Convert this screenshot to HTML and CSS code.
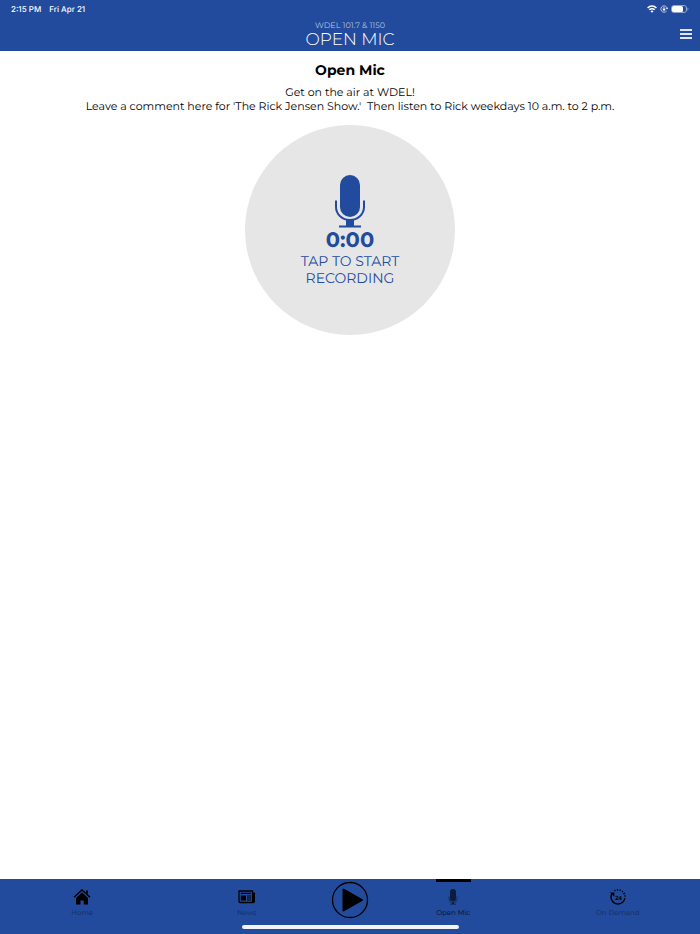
FILE: index.html
```html
<!DOCTYPE html>
<html lang="en">
<head>
<meta charset="utf-8">
<meta name="viewport" content="width=device-width, initial-scale=1">
<title>Open Mic</title>
<link rel="stylesheet" href="styles.css">
</head>
<body>
<header class="header">
  <div class="status">
    <div class="status-text"><span>2:15 PM</span><span>Fri Apr 21</span></div>
    <div class="status-icons">
      <svg width="10" height="8" viewBox="0 0 10 8" fill="none" stroke="#fff" stroke-width="1.500"><path d="M.6 3C3 .4 7 .4 9.400 3M2.300 4.800c1.500-1.500 3.900-1.500 5.400 0"/><path d="M5 7.800 3.500 6.200c.8-.8 2.200-.8 3 0z" fill="#fff" stroke="none"/></svg>
      <svg width="8" height="8" viewBox="0 0 8 8" fill="none" stroke="#e4eaf5" stroke-width=".8"><path d="M6.600 6A3.200 3.200 0 1 1 7.200 3.500M5.900 3l1.300 1 .7-1.400"/><rect x="2.800" y="3.600" width="2.400" height="2" fill="#fff" stroke="none"/><path d="M3.200 3.800v-.6a.8.8 0 0 1 1.600 0v.6" stroke-width=".6"/></svg>
      <svg width="18" height="8" viewBox="0 0 18 8"><rect x=".5" y=".5" width="15" height="7" rx="2.500" fill="none" stroke="#91a5cd"/><rect x="1" y="1" width="11" height="6" rx="1.500" fill="#fff"/><path d="M16.500 2.500v3c1.200-.5 1.200-2.500 0-3z" fill="#91a5cd"/></svg>
    </div>
  </div>
  <div class="titlebar">
    <div class="titles">
      <p class="station">WDEL 101.7 &amp; 1150</p>
      <h1 class="title">OPEN MIC</h1>
    </div>
    <button class="menu" type="button" aria-label="Menu"><svg width="12" height="10" viewBox="0 0 12 10" fill="#dfe5f1"><path d="M0 0h12v2H0zM0 4h12v2H0zM0 8h12v2H0z"/></svg></button>
  </div>
</header>
<main class="main">
  <h2 class="heading">Open Mic</h2>
  <p class="intro">Get on the air at WDEL!<br>Leave a comment here for 'The Rick Jensen Show.'&nbsp; Then listen to Rick weekdays 10 a.m. to 2 p.m.</p>
  <button class="record" type="button">
    <svg width="30" height="53" viewBox="0 0 30 53" fill="#224b9d"><rect x="5" y="0" width="20" height="42" rx="10"/><path d="M1 25.500v6.500a14 13 0 0 0 28 0v-6.500" fill="none" stroke="#224b9d" stroke-width="2"/><path d="M11 44h8v6.500h7V52.500H4V50.500h7z"/></svg>
    <span class="time">0:00</span>
    <span class="prompt">TAP TO START<br>RECORDING</span>
  </button>
</main>
<nav class="nav">
  <div class="tabs">
    <a class="tab" href="#home">
      <svg width="18" height="16" viewBox="0 0 18 16"><path d="M3 9 9 3.400 15 9v6.500h-4.300v-4H7.500v4H3z"/><path d="M1 8.300 9 1l8 7.300" fill="none" stroke="#000" stroke-width="1.500"/><path d="M13 1.500h2v4.300l-2-1.800z"/></svg>
      <span>Home</span>
    </a>
    <a class="tab" href="#news">
      <svg width="18" height="16" viewBox="0 0 18 16"><path d="M1 2h13.500v11.500H2Q1 13.500 1 12.500z" fill="none" stroke="#000" stroke-width="1.300"/><path d="M15 3.500h2V13q-1 1.500-2.500 1zM2.800 3.800h10v1.300h-10zM2.800 6.500H8v5H2.800zM9 6.500h4v1H9zM9 8.500h4v1H9zM9 10.500h4v1H9z"/></svg>
      <span>News</span>
    </a>
    <button class="play" type="button" aria-label="Play"><svg width="38" height="38" viewBox="0 0 38 38"><circle cx="19" cy="19" r="17.500" fill="none" stroke="#000" stroke-width="1.300"/><path d="M12.500 8.500 31 19 12.500 29.500z" stroke="#000" stroke-width="2" stroke-linejoin="round"/></svg></button>
    <a class="tab active" href="#mic" aria-current="page">
      <svg width="18" height="16" viewBox="0 0 18 16" fill="#0b1c3d"><rect x="6" y="0" width="6" height="12.500" rx="3"/><path d="M5 7.500v2.500a4 3.800 0 0 0 8 0V7.500" fill="none" stroke="#0b1c3d" stroke-width=".6"/><path d="M8 13.500h2v1.300h2v.8H6v-.8h2z"/></svg>
      <span>Open Mic</span>
    </a>
    <a class="tab" href="#demand">
      <svg width="18" height="16" viewBox="0 0 18 16"><path d="M3 4.500A7 7 0 1 0 16 9" fill="none" stroke="#000" stroke-width="1.500"/><path d="M.8 3.500h4.500v4.300z"/><path d="M5.500 1.800A7 7 0 0 1 16 7.800" fill="none" stroke="#000" stroke-width="1.700" stroke-dasharray="1.200 1.400"/><text class="day" x="9.500" y="10.500" text-anchor="middle">24</text></svg>
      <span>On Demand</span>
    </a>
  </div>
  <div class="indicator"></div>
</nav>
</body>
</html>
```
FILE: styles.css
```css
* { box-sizing: border-box; }
body {
  display: flex;
  flex-direction: column;
  min-height: 100vh;
  margin: 0;
  background: #fff;
  color: #000;
  font-family: Montserrat, Inter, sans-serif;
  text-rendering: geometricPrecision;
}
h1, h2, p { margin: 0; }
button {
  padding: 0;
  border: 0;
  background: none;
  color: inherit;
  font: inherit;
  text-rendering: inherit;
  cursor: pointer;
}
svg { display: block; }
.header { background: #224b9d; color: #fff; }
.status {
  display: flex;
  justify-content: space-between;
  align-items: center;
  height: 17px;
  padding: 0 11px;
  font: 500 8px/16px Inter, sans-serif;
}
.status-text { display: flex; gap: 8px; }
.status-icons { display: flex; align-items: center; gap: 3px; }
.titlebar {
  display: grid;
  grid-template-columns: 1fr auto 1fr;
  align-items: center;
  height: 34px;
  padding: 0 8px;
}
.titles { grid-column: 2; text-align: center; }
.station { color: #b9c6e0; font-size: 8px; line-height: 12px; }
.title { font-size: 17px; font-weight: 300; line-height: 17px; }
.menu { justify-self: end; }
.main {
  flex: 1;
  display: flex;
  flex-direction: column;
  align-items: center;
  padding: 10px 16px;
  text-align: center;
}
.heading { font-size: 14px; font-weight: 700; line-height: 18px; }
.intro { margin-top: 6px; font-size: 11px; line-height: 14px; }
.record {
  display: flex;
  flex-direction: column;
  align-items: center;
  width: 210px;
  height: 210px;
  margin-top: 12px;
  padding-top: 50px;
  border-radius: 50%;
  background: #e6e6e6;
  color: #224b9d;
}
.time { font-size: 21px; font-weight: 700; line-height: 25px; }
.prompt { font-size: 14px; font-weight: 400; line-height: 17px; }
.nav { height: 55px; background: #224b9d; }
.tabs { display: grid; grid-template-columns: 1fr 1fr 42px 1fr 1fr; }
.tab {
  position: relative;
  display: flex;
  flex-direction: column;
  align-items: center;
  gap: 3px;
  height: 46px;
  padding-top: 10px;
  color: #17336c;
  font-size: 7px;
  font-weight: 500;
  line-height: 9px;
  text-decoration: none;
}
.active { color: #0b1c3d; }
.active::before {
  content: "";
  position: absolute;
  top: 0;
  width: 35px;
  height: 3px;
  background: #000;
}
.play { display: flex; justify-content: center; padding-top: 2px; }
.day { font: 700 6px "Liberation Sans", sans-serif; }
.indicator {
  width: 31%;
  height: 4px;
  margin: 0 auto;
  border-radius: 2px;
  background: #f3f4f7;
}
```
